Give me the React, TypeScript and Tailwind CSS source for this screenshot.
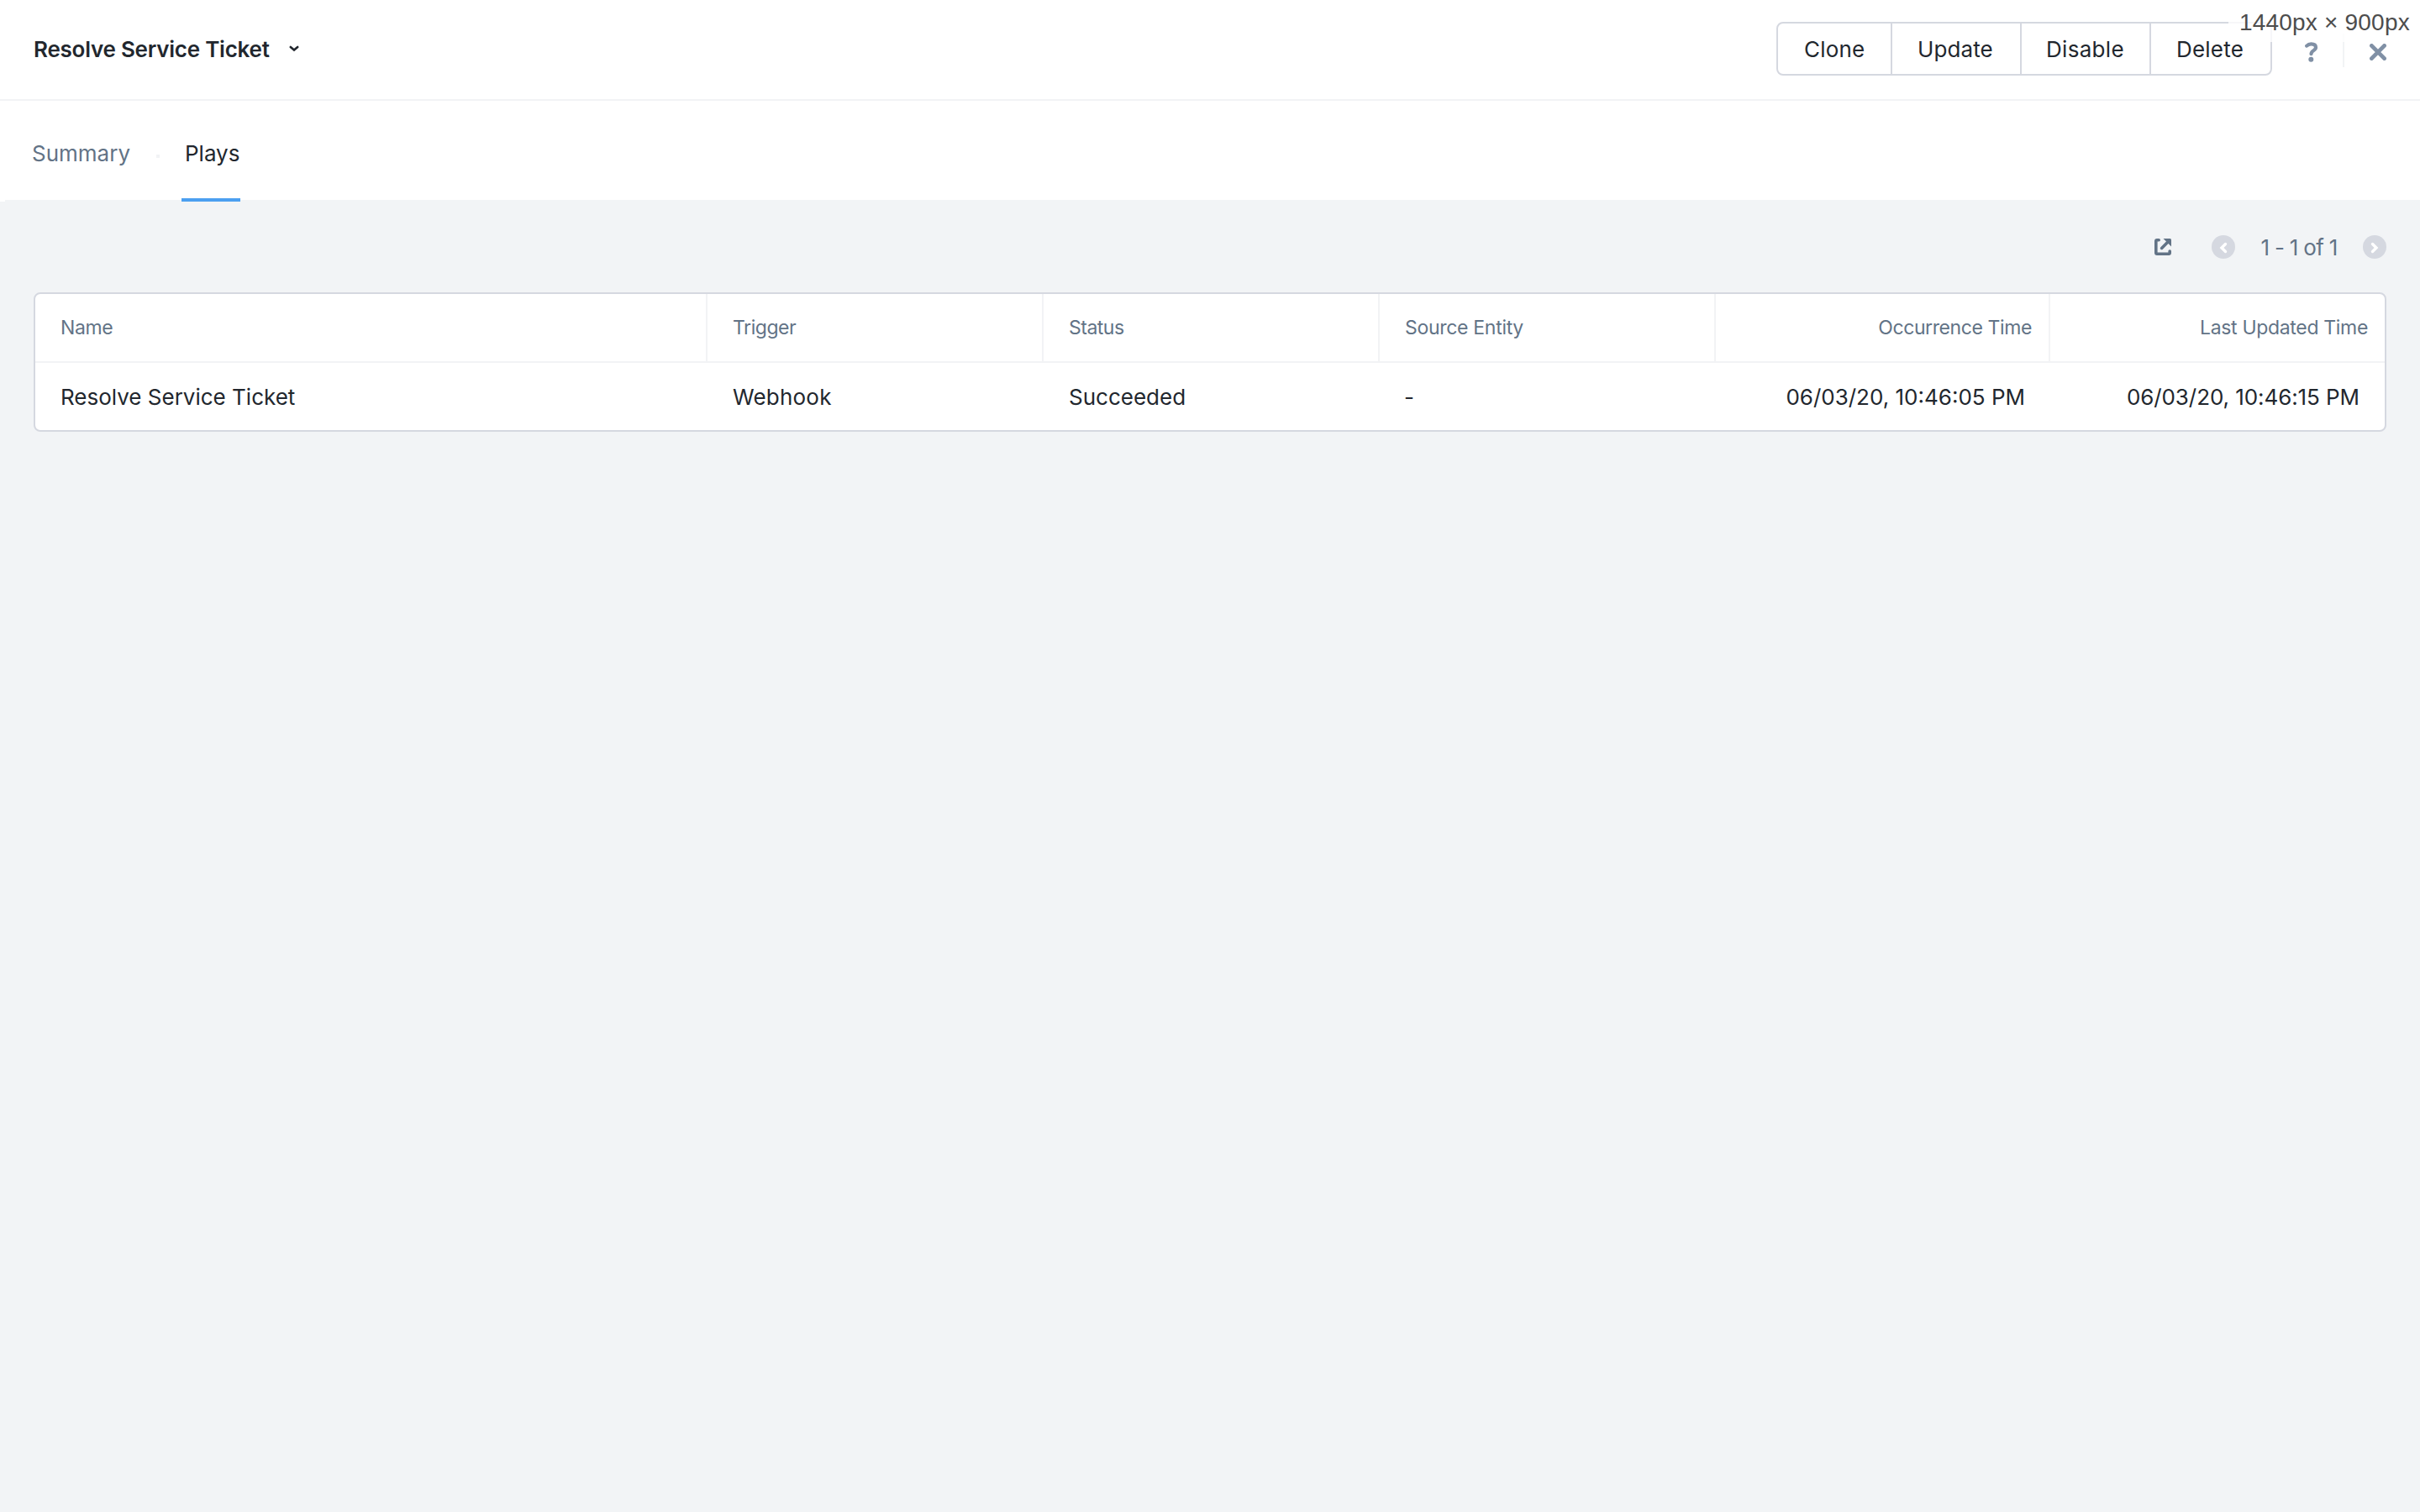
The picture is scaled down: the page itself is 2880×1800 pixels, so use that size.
import clsx from "clsx"

interface Column {
  label: string
  value: string
  labelClass: string
  valueClass: string
  cellClass: string
  alignRight?: boolean
}

const actions = [
  { label: "Clone", className: "w-[138px] pl-[33px] tracking-[0.2px]" },
  { label: "Update", className: "w-[154px] pl-[30px] tracking-[0.1px]" },
  { label: "Disable", className: "w-[154px] pl-[29px] tracking-[0.3px]" },
  { label: "Delete", className: "w-[144px] pl-[30px] tracking-[0.2px]" },
]

const columns: Column[] = [
  {
    label: "Name",
    value: "Resolve Service Ticket",
    labelClass: "tracking-[-0.4px]",
    valueClass: "",
    cellClass: "w-[800px] pl-[30px]",
  },
  {
    label: "Trigger",
    value: "Webhook",
    labelClass: "tracking-[-0.45px]",
    valueClass: "tracking-[0.2px]",
    cellClass: "w-[400px] pl-[30px]",
  },
  {
    label: "Status",
    value: "Succeeded",
    labelClass: "tracking-[-0.5px]",
    valueClass: "",
    cellClass: "w-[400px] pl-[30px]",
  },
  {
    label: "Source Entity",
    value: "-",
    labelClass: "tracking-[-0.3px]",
    valueClass: "-ml-px",
    cellClass: "w-[400px] pl-[30px]",
  },
  {
    label: "Occurrence Time",
    value: "06/03/20, 10:46:05 PM",
    labelClass: "tracking-[-0.4px]",
    valueClass: "",
    cellClass: "w-[398px]",
    alignRight: true,
  },
  {
    label: "Last Updated Time",
    value: "06/03/20, 10:46:15 PM",
    labelClass: "tracking-[-0.32px]",
    valueClass: "tracking-[-0.08px]",
    cellClass: "w-[398px]",
    alignRight: true,
  },
]

function ChevronDownIcon() {
  return (
    <svg className="ml-[23px] h-[8px] w-[12px]" viewBox="0 0 12 8" fill="none" stroke="#22272e" strokeWidth="2.6">
      <path d="M1.8 2 6 5.6 10.200 2" strokeLinecap="round" />
    </svg>
  )
}

function HelpIcon() {
  return (
    <svg className="h-[24px] w-[16px]" viewBox="0 0 16 24" fill="none">
      <path
        d="M2.200 4.600C3.800 2.900 5.600 2.400 7.500 2.400c3.300 0 5.500 1.400 5.500 4.100 0 3.700-5.500 3.600-5.500 7.700"
        stroke="#8090a5"
        strokeWidth="4.200"
        strokeLinecap="round"
      />
      <circle cx="7.300" cy="20.800" r="3" fill="#8090a5" />
    </svg>
  )
}

function CloseIcon() {
  return (
    <svg className="h-[20px] w-[20px]" viewBox="0 0 20 20" fill="none">
      <path d="M2.400 2.400 17.600 17.600M17.600 2.400 2.400 17.600" stroke="#8090a5" strokeWidth="4.800" strokeLinecap="round" />
    </svg>
  )
}

function ExportIcon() {
  return (
    <svg className="h-[20px] w-[20px]" viewBox="0 0 20 20" fill="none" stroke="#627386" strokeWidth="3.600">
      <path
        d="M5.200 1.800H3A1.200 1.200 0 0 0 1.800 3v14A1.200 1.200 0 0 0 3 18.200h14a1.200 1.200 0 0 0 1.200-1.200v-2"
        strokeLinecap="round"
      />
      <path d="M8.600 11.400 15.500 4.500" strokeLinecap="round" />
      <path d="M10.500 0h8A1.500 1.500 0 0 1 20 1.500V9.500Z" fill="#627386" stroke="none" />
    </svg>
  )
}

function PageButton({ direction }: { direction: "prev" | "next" }) {
  return (
    <button className="flex h-7 w-7 items-center justify-center rounded-full bg-[#d5d8e0]">
      <svg className="h-[28px] w-[28px]" viewBox="0 0 28 28" fill="none" stroke="#ffffff" strokeWidth="3.400">
        <path
          d={direction === "prev" ? "M16.500 10.500 12 15l4.500 4.500" : "M11.500 10.500 16 15l-4.500 4.500"}
          strokeLinecap="round"
        />
      </svg>
    </button>
  )
}

function Header() {
  return (
    <header className="flex h-[120px] items-center border-b-2 border-[#f2f3f5] bg-white pb-0.5 pl-10">
      <h1 className="pt-0.5 text-[26px] leading-8 font-semibold tracking-[-0.24px]">Resolve Service Ticket</h1>
      <ChevronDownIcon />
      <div className="ml-auto flex h-16 overflow-hidden rounded-lg border-2 border-[#d5d8e0]">
        {actions.map((action, i) => (
          <button
            key={action.label}
            className={clsx(
              "pt-0.5 text-left text-[26px] leading-8",
              i === 0 && "-ml-0.5",
              i < actions.length - 1 ? "border-r-2 border-[#d5d8e0]" : "-mr-0.5",
              action.className
            )}
          >
            {action.label}
          </button>
        ))}
      </div>
      <div className="mt-1 flex h-10 w-[176px] items-center">
        <button className="ml-[39px] pt-1">
          <HelpIcon />
        </button>
        <span className="ml-[29px] h-10 w-0.5 bg-[#f2f3f5]" />
        <button className="ml-[30px] pt-1">
          <CloseIcon />
        </button>
      </div>
    </header>
  )
}

function Tabs() {
  return (
    <nav className="flex h-[120px] bg-white pl-1.5 text-[26px] leading-8">
      <div className="flex w-[210px] border-b-2 border-[#f2f4f6] pl-8">
        <button className="w-[118px] pt-2 text-left text-[#627386]">Summary</button>
        <span className="mt-16 ml-[30px] h-1 w-1 bg-[#f2f3f5]" />
      </div>
      <button className="w-[70px] border-b-4 border-[#4b9ff0] pt-2.5 pl-[4px] text-left">Plays</button>
      <div className="flex-1 border-b-2 border-[#f2f4f6]" />
    </nav>
  )
}

function Pagination() {
  return (
    <div className="flex h-[108px] items-center justify-end text-[#627386]">
      <button>
        <ExportIcon />
      </button>
      <div className="ml-12 flex items-center">
        <PageButton direction="prev" />
        <span className="w-[152px] pt-0.5 text-center text-[26px] leading-8 tracking-[-0.7px]">1 - 1 of 1</span>
        <PageButton direction="next" />
      </div>
    </div>
  )
}

function PlaysTable() {
  return (
    <div className="overflow-hidden rounded-lg border-2 border-[#d5d8e0] bg-white">
      <div className="flex h-[82px] border-b-2 border-[#f2f3f5] text-[23px] leading-8 text-[#627386]">
        {columns.map((col, i) => (
          <div
            key={col.label}
            className={clsx(
              "flex items-center",
              col.cellClass,
              i < columns.length - 1 && "border-r-2 border-[#f2f3f5]",
              col.alignRight && "justify-end pr-5"
            )}
          >
            <span className={col.labelClass}>{col.label}</span>
          </div>
        ))}
      </div>
      <div className="flex h-20 text-[26px] leading-8">
        {columns.map((col) => (
          <div
            key={col.label}
            className={clsx("flex items-center pt-0.5", col.cellClass, col.alignRight && "justify-end pr-[30px]")}
          >
            <span className={col.valueClass}>{col.value}</span>
          </div>
        ))}
      </div>
    </div>
  )
}

export default function App() {
  return (
    <div className="relative h-[1800px] w-[2880px] overflow-hidden bg-[#f2f4f6] font-['Inter',sans-serif] text-[#22272e]">
      <Header />
      <Tabs />
      <main className="px-10">
        <Pagination />
        <PlaysTable />
      </main>
      <div className="absolute top-0 right-0 h-[50px] w-[228px] bg-white/80 pt-[11px] pl-[13px] font-['Liberation_Sans',sans-serif] text-[28px] leading-8 tracking-[0.2px] whitespace-nowrap text-[#4d4d4d]">
        1440px × 900px
      </div>
    </div>
  )
}
